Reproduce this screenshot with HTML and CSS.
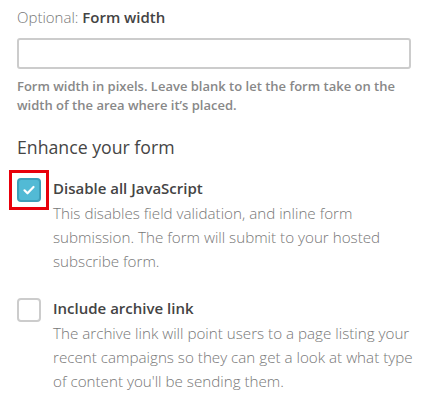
FILE: index.html
```html
<!DOCTYPE html>
<html>
<head>
<meta charset="utf-8">
<link rel="stylesheet" href="styles.css">
</head>
<body>
<div class="panel">
  <div class="field">
    <label class="field-label"><span class="optional">Optional:</span> Form width</label>
    <input class="text-input" type="text">
    <p class="help">Form width in pixels. Leave blank to let the form take on the width of the area where it’s placed.</p>
  </div>
  <h3 class="section-title">Enhance your form</h3>
  <div class="option">
    <span class="check checked highlighted">
      <svg viewBox="0 0 24 24" width="24" height="24"><path d="M7.5 12.3l3 3 6-6.3" fill="none" stroke="#fff" stroke-width="2.2" stroke-linecap="round" stroke-linejoin="round"/></svg>
    </span>
    <div class="option-text">
      <div class="option-title">Disable all JavaScript</div>
      <p class="option-desc">This disables field validation, and inline form submission. The form will submit to your hosted subscribe form.</p>
    </div>
  </div>
  <div class="option">
    <span class="check"></span>
    <div class="option-text">
      <div class="option-title">Include archive link</div>
      <p class="option-desc">The archive link will point users to a page listing your recent campaigns so they can get a look at what type of content you'll be sending them.</p>
    </div>
  </div>
</div>
</body>
</html>
```
FILE: styles.css
```css
html, body {
  margin: 0;
  padding: 0;
  background: #fff;
}
body {
  font-family: "Open Sans", "Liberation Sans", sans-serif;
  color: #454545;
}
.panel {
  width: 394px;
  padding: 7px 0 0 17px;
}
.field-label {
  display: block;
  font-size: 15px;
  font-weight: 600;
  line-height: 20px;
  color: #444;
}
.optional {
  font-weight: 300;
  color: #777;
}
.text-input {
  display: block;
  box-sizing: border-box;
  width: 394px;
  height: 31px;
  margin-top: 11px;
  border: 2px solid #ccc;
  border-radius: 3px;
  background: #fff;
  outline: none;
}
.help {
  margin: 8px 0 0;
  font-size: 13px;
  font-weight: 600;
  line-height: 19px;
  color: #888;
}
.section-title {
  margin: 20px 0 0;
  font-size: 17.7px;
  font-weight: 400;
  line-height: 24px;
  color: #454545;
}
.option {
  display: flex;
  gap: 12px;
  margin-top: 19px;
}
.option + .option {
  margin-top: 25px;
}
.check {
  flex: none;
  box-sizing: border-box;
  width: 24px;
  height: 24px;
  border: 2px solid #ccc;
  border-radius: 4px;
  background: #fff;
  position: relative;
}
.check.checked {
  background: #52bad5;
  border-color: #3e9fb9;
}
.check svg {
  position: absolute;
  left: -2px;
  top: -2px;
}
.check.highlighted::after {
  content: "";
  position: absolute;
  left: -10px;
  top: -10px;
  width: 34px;
  height: 34px;
  border: 3px solid #e8000b;
}
.option-text {
  flex: 1;
  padding-top: 0;
}
.option-title {
  font-size: 15px;
  font-weight: 600;
  line-height: 20px;
  color: #444;
}
.option-desc {
  margin: 3px -10px 0 0;
  font-size: 15.2px;
  font-weight: 300;
  line-height: 24px;
  color: #777;
}
```
